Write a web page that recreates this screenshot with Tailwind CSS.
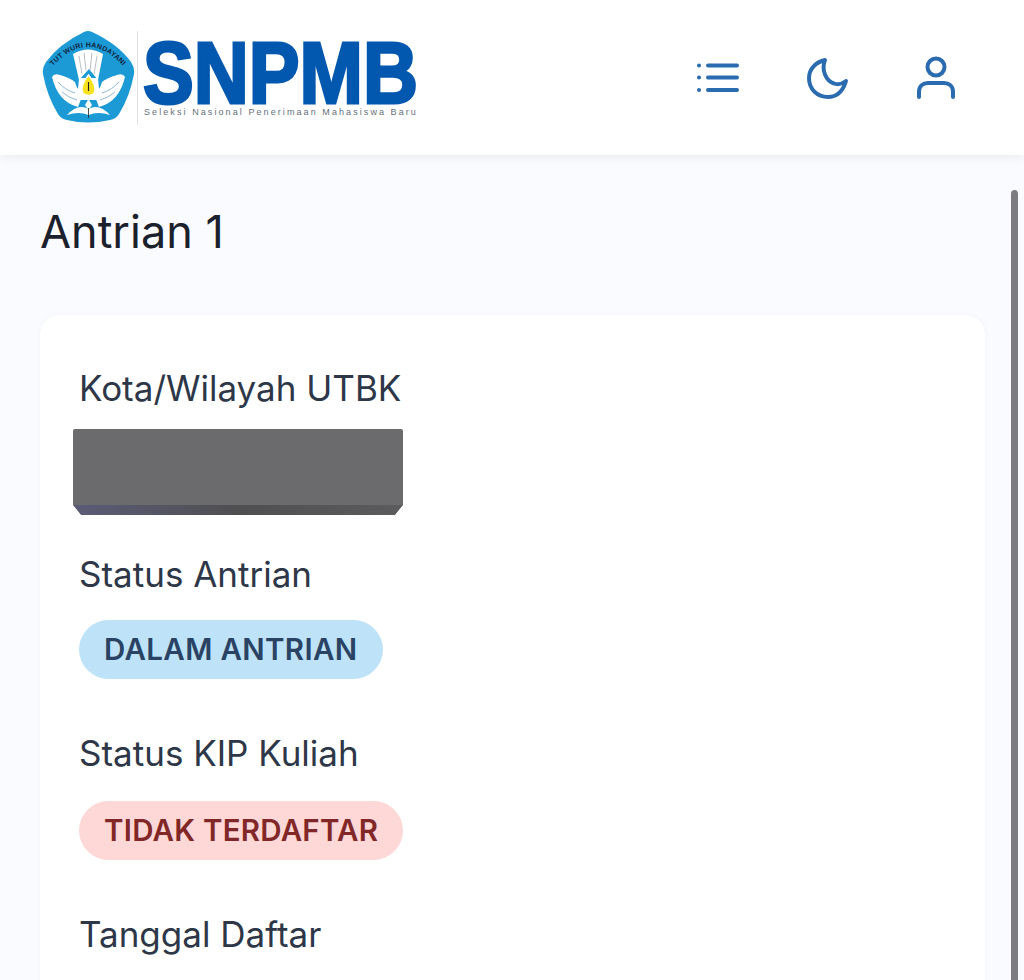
<!DOCTYPE html>
<html lang="en">
<head>
  <meta charset="UTF-8">
  <meta name="viewport" content="width=device-width, initial-scale=1.0">
  <title>Antrian</title>
  <script src="https://cdn.jsdelivr.net/npm/@tailwindcss/browser@4"></script>
</head>
<body class="relative h-[980px] overflow-hidden bg-[#fafbfe] font-['Inter',sans-serif] text-[#2d3748]">
  <!-- Header -->
  <header class="relative z-10 flex h-[155px] items-center justify-between bg-white pl-[42px] pr-[68px] shadow-[0_2px_10px_rgba(0,0,0,0.07)]">
    <div class="flex items-center">
      <svg class="-mt-[2px] h-[94px] w-[93px] shrink-0" viewBox="0 0 93 94">
        <path d="M42 2 Q46 0 50 2 Q76 14 89 32 Q93 38 92 44 Q88 66 77 84 Q74 89 68 90 Q46 95 25 90 Q19 89 16 84 Q5 66 1 44 Q0 38 4 32 Q17 14 42 2Z" fill="#1b9ad6"/>
        <defs><path id="arc" d="M9 38 Q46 -4 83 38"/></defs>
        <text class="font-['Liberation_Sans',sans-serif] font-bold" font-size="7" fill="#10253f" letter-spacing=".3"><textPath href="#arc" startOffset="50%" text-anchor="middle">TUT WURI HANDAYANI</textPath></text>
        <path d="M31 24 Q46 15 61 24 L56 50 L47 39 L37 50 Z" fill="#fff"/>
        <path d="M37 26 L40 44 M42 23 L44 40 M50 23 L48 40 M55 26 L52 44" stroke="#a7aeb6" stroke-width=".8" fill="none"/>
        <path d="M37 48 L56 48 L58 70 L35 70Z" fill="#fff"/>
        <path d="M10 47 Q12 43 18 45 Q28 48 33 52 Q35 60 41 64 L36 77 Q16 72 10 47Z" fill="#fff"/>
        <path d="M83 47 Q81 43 75 45 Q65 48 60 52 Q58 60 52 64 L57 77 Q77 72 83 47Z" fill="#fff"/>
        <path d="M16 52 Q23 60 33 63 M20 62 Q27 68 35 70 M77 52 Q70 60 60 63 M73 62 Q66 68 58 70" stroke="#8fb9d6" stroke-width="1" fill="none"/>
        <path d="M46.500 45 Q55 55 52.500 63 Q47 68 40.500 63 Q38 55 46.500 45Z" fill="#f7e11f" stroke="#fff" stroke-width="1.500"/>
        <path d="M46.500 52 V61" stroke="#222" stroke-width="1.100"/>
        <path d="M25 85 Q36 73 46.500 79 Q57 73 68 85 Q56 81 46.500 85 Q37 81 25 85Z" fill="#fff"/>
        <path d="M46.500 69 L50 75 L46.500 80 L43 75Z" fill="#fff"/>
        <path d="M46.500 78 V88" stroke="#222" stroke-width=".8"/>
      </svg>
      <div class="ml-[2px] h-[94px] w-px bg-[#dfe3e6]"></div>
      <div class="ml-[5px] flex w-[280px] flex-col pt-[1px]">
        <span class="origin-left scale-x-[.865] font-['Liberation_Sans',sans-serif] text-[88px] leading-[67px] font-bold text-[#0257ae] [-webkit-text-stroke:3px_#0257ae]">SNPMB</span>
        <span class="mt-[1px] ml-[1px] font-['Liberation_Sans',sans-serif] text-[9px] leading-[11px] tracking-[2.08px] whitespace-nowrap text-[#666f78]">Seleksi Nasional Penerimaan Mahasiswa Baru</span>
      </div>
    </div>
    <div class="flex items-center gap-[66px] text-[#2b6cb0]">
      <svg class="h-[34px] w-[44px]" viewBox="0 0 44 34" fill="none" stroke="currentColor" stroke-width="4" stroke-linecap="round">
        <path d="M12 4.500H41M12 16.500H41M12 29H41" />
        <path d="M3 4.500h.01M3 16.500h.01M3 29h.01" />
      </svg>
      <svg class="h-[44px] w-[44px]" viewBox="0 0 44 44" fill="none" stroke="currentColor" stroke-width="4" stroke-linejoin="round">
        <path d="M19 4 C10 6 3 13 3 22 C3 33 11 41 22 41 C31 41 37 35 40 25 C36 28 32 29 28 27.500 C20 25 15 14 19 4Z" />
      </svg>
      <svg class="h-[44px] w-[40px]" viewBox="0 0 40 44" fill="none" stroke="currentColor" stroke-width="4" stroke-linecap="round">
        <circle cx="20" cy="11" r="8.500" />
        <path d="M3 41 V36 C3 30 7 27 12 27 H28 C33 27 37 30 37 36 V41" />
      </svg>
    </div>
  </header>

  <main class="px-10">
    <h1 class="mt-[47px] text-[45px] leading-[60px] font-normal text-[#1a202c]">Antrian 1</h1>
    <!-- Card -->
    <section class="mt-[53px] h-[665px] w-[945px] rounded-t-[20px] bg-white pt-[50px] pr-10 pl-[39px] shadow-[0_0_6px_rgba(0,0,0,0.03)]">
      <p class="text-[35px] leading-[46px]">Kota/Wilayah UTBK</p>
      <div class="relative mt-[18px] -ml-[6px] h-[86px] w-[330px] rounded-t-[2px] bg-[#6b6b6d] [clip-path:polygon(0_0,100%_0,100%_88%,97.500%_100%,2.500%_100%,0_88%)]">
        <div class="absolute right-0 bottom-0 left-0 h-[10px] bg-gradient-to-r from-[#5b5b78] via-[#4f4f51] to-[#5c5c5e]"></div>
      </div>
      <p class="mt-[36px] text-[35px] leading-[46px]">Status Antrian</p>
      <span class="mt-[23px] inline-flex h-[59px] items-center rounded-full bg-[#bee3f8] pr-[25px] pl-[25px] text-[29.500px] font-semibold tracking-[0.35px] text-[#2a4365]">DALAM ANTRIAN</span>
      <p class="mt-[51px] text-[35px] leading-[46px]">Status KIP Kuliah</p>
      <span class="mt-[25px] inline-flex h-[59px] items-center rounded-full bg-[#fed7d7] px-[25px] text-[29.500px] font-semibold tracking-[0.25px] text-[#822727]">TIDAK TERDAFTAR</span>
      <p class="mt-[51px] text-[35px] leading-[46px]">Tanggal Daftar</p>
    </section>
  </main>

  <!-- Scrollbar -->
  <div class="absolute top-[190px] right-[6px] bottom-0 w-[7px] rounded-t-full bg-[#7d7d80]"></div>
</body>
</html>
